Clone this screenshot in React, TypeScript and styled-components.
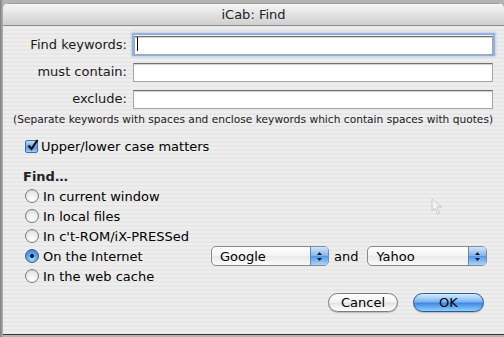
import styled, { createGlobalStyle } from "styled-components";

const GlobalStyle = createGlobalStyle`
  html, body {
    margin: 0;
    padding: 0;
    background: #9c9c9c;
  }
  body {
    font-family: "DejaVu Sans", "Liberation Sans", sans-serif;
    color: #000;
  }
`;

const Screen = styled.div`
  width: 504px;
  height: 337px;
  overflow: hidden;
  padding: 3px 0 0 3px;
  box-sizing: border-box;
  background: linear-gradient(to right, #7d7d7d 0, #b4b4b4 3px);
`;

const Window = styled.div`
  position: relative;
  width: 501px;
  height: 331px;
  border-radius: 6px 6px 0 0;
  overflow: hidden;
  border-bottom: 1px solid #3a3a3a;
  display: flex;
  flex-direction: column;
  background: repeating-linear-gradient(#eeeeee 0 2px, #e7e7e7 2px 4px);
`;

const TitleBar = styled.div`
  height: 21px;
  flex: none;
  display: flex;
  align-items: center;
  justify-content: center;
  background: linear-gradient(#f6f6f6, #e2e2e2 50%, #d0d0d0);
  border-bottom: 1px solid #8d8d8d;
  border-top: 1px solid #9a9a9a;
  font-size: 13px;
  color: #222;
`;

const Body = styled.div`
  padding: 9px 11px 0 10px;
  display: flex;
  flex-direction: column;
`;

const Fields = styled.div`
  display: grid;
  grid-template-columns: 114px 1fr;
  column-gap: 6px;
  row-gap: 8px;
  align-items: center;
`;

const Label = styled.label`
  text-align: right;
  font-size: 13px;
  color: #1a1a1a;
`;

const FieldWrap = styled.div<{ $focused?: boolean }>`
  position: relative;
  height: 19px;
  margin-left: ${(p) => (p.$focused ? "1px" : "0")};
  box-shadow: ${(p) => (p.$focused ? "0 0 0 2px #8fb1dc, 0 0 2px 3px #b9cfe9" : "none")};
`;

const TextInput = styled.input`
  width: 100%;
  height: 100%;
  box-sizing: border-box;
  margin: 0;
  padding: 0 3px;
  border: 1px solid #a6a6a6;
  border-top-color: #6f6f6f;
  background: #fff;
  box-shadow: inset 0 1px 1px #d0d0d0;
  outline: none;
  font-size: 13px;
  font-family: inherit;
`;

const Caret = styled.span`
  position: absolute;
  left: 3px;
  top: 2px;
  width: 1px;
  height: 14px;
  background: #000;
`;

const Note = styled.p`
  margin: 5px 0 0 0;
  font-size: 10.6px;
  text-align: center;
  color: #1a1a1a;
  white-space: nowrap;
  letter-spacing: 0.02px;
`;

const Check = styled.label`
  margin: 14px 0 0 12px;
  display: flex;
  align-items: center;
  gap: 3px;
  font-size: 13px;
`;

const CheckBox = styled.span`
  width: 13px;
  height: 13px;
  box-sizing: border-box;
  border: 1px solid #3d6fb3;
  border-radius: 2px;
  background: linear-gradient(#c6ddf6, #6ea5e4 50%, #4a8be0 51%, #9fd0fb);
  display: flex;
  align-items: center;
  justify-content: center;
  position: relative;
`;

const Heading = styled.div`
  margin: 15px 0 0 10px;
  font-size: 13px;
  font-weight: bold;
  color: #222;
`;

const Options = styled.div`
  margin: 5px 0 0 12px;
  display: flex;
  flex-direction: column;
  gap: 6px;
`;

const OptionRow = styled.div`
  display: flex;
  align-items: center;
  height: 14px;
`;

const Radio = styled.label`
  display: flex;
  align-items: center;
  gap: 4px;
  font-size: 13px;
  width: 186px;
`;

const RadioDot = styled.span<{ $on?: boolean }>`
  width: 14px;
  height: 14px;
  box-sizing: border-box;
  border-radius: 50%;
  border: 1px solid ${(p) => (p.$on ? "#2f5f9e" : "#7a7a7a")};
  background: ${(p) =>
    p.$on
      ? "radial-gradient(circle at 50% 75%, #a9dafd, #5d9ce6 55%, #3a7dd6)"
      : "radial-gradient(circle at 50% 80%, #ffffff, #ececec 55%, #cfcfcf)"};
  display: flex;
  align-items: center;
  justify-content: center;
  &::after {
    content: "";
    display: ${(p) => (p.$on ? "block" : "none")};
    width: 4px;
    height: 4px;
    border-radius: 50%;
    background: #111;
  }
`;

const Engines = styled.div`
  display: flex;
  align-items: center;
  font-size: 13px;
`;

const And = styled.span`
  margin: 0 9px 0 5px;
`;

const Popup = styled.div<{ $w: number }>`
  width: ${(p) => p.$w}px;
  height: 20px;
  box-sizing: border-box;
  border: 1px solid #8a8a8a;
  border-radius: 5px;
  background: linear-gradient(#ffffff, #f3f3f3 50%, #e9e9e9 51%, #fafafa);
  display: flex;
  align-items: stretch;
  overflow: hidden;
  font-size: 13px;
`;

const PopupText = styled.span`
  flex: 1;
  padding-left: 8px;
  display: flex;
  align-items: center;
`;

const PopupArrows = styled.span`
  width: 17px;
  border-left: 1px solid #5c84b8;
  background: linear-gradient(#d2e6fb, #7fb3ec 50%, #5596e5 51%, #a8d6fd);
  display: flex;
  align-items: center;
  justify-content: center;
`;

const Buttons = styled.div`
  margin: 10px 9px 0 0;
  display: flex;
  justify-content: flex-end;
  gap: 15px;
`;

const Button = styled.button<{ $primary?: boolean }>`
  width: ${(p) => (p.$primary ? "71px" : "70px")};
  height: 19px;
  border-radius: 10px;
  border: 1px solid ${(p) => (p.$primary ? "#2a5aa0" : "#7d7d7d")};
  padding: 0;
  font-family: inherit;
  font-size: 13px;
  color: #000;
  background: ${(p) =>
    p.$primary
      ? "linear-gradient(#d6ecff, #7ab6f0 45%, #3f8ae4 55%, #8fd0ff)"
      : "linear-gradient(#ffffff, #f4f4f4 45%, #e4e4e4 55%, #ffffff)"};
  box-shadow: 0 1px 1px rgba(0, 0, 0, 0.2);
`;

const Pointer = styled.svg`
  position: absolute;
  left: 428px;
  top: 195px;
  opacity: 0.45;
`;

function Arrows() {
  return (
    <svg width="7" height="11" viewBox="0 0 7 11">
      <path d="M3.5 1 L6 4 L1 4 Z" fill="#1a1a1a" />
      <path d="M3.5 10 L6 7 L1 7 Z" fill="#1a1a1a" />
    </svg>
  );
}

export default function App() {
  const options = [
    "In current window",
    "In local files",
    "In c't-ROM/iX-PRESSed",
    "On the Internet",
    "In the web cache",
  ];

  return (
    <>
      <GlobalStyle />
      <Screen>
        <Window>
          <TitleBar>iCab: Find</TitleBar>
          <Body>
            <Fields>
              <Label>Find keywords:</Label>
              <FieldWrap $focused>
                <TextInput />
                <Caret />
              </FieldWrap>
              <Label>must contain:</Label>
              <FieldWrap>
                <TextInput />
              </FieldWrap>
              <Label>exclude:</Label>
              <FieldWrap>
                <TextInput />
              </FieldWrap>
            </Fields>
            <Note>
              (Separate keywords with spaces and enclose keywords which contain spaces with quotes)
            </Note>
            <Check>
              <CheckBox>
                <svg width="12" height="12" viewBox="0 0 12 12" style={{ position: "absolute", left: 1, top: -2 }}>
                  <path d="M1.5 6.5 L4.5 10 L10.5 1" stroke="#111" strokeWidth="2.2" fill="none" />
                </svg>
              </CheckBox>
              Upper/lower case matters
            </Check>
            <Heading>Find…</Heading>
            <Options>
              {options.map((label, i) => (
                <OptionRow key={label}>
                  <Radio>
                    <RadioDot $on={i === 3} />
                    {label}
                  </Radio>
                  {i === 3 && (
                    <Engines>
                      <Popup $w={118}>
                        <PopupText>Google</PopupText>
                        <PopupArrows>
                          <Arrows />
                        </PopupArrows>
                      </Popup>
                      <And>and</And>
                      <Popup $w={120}>
                        <PopupText>Yahoo</PopupText>
                        <PopupArrows>
                          <Arrows />
                        </PopupArrows>
                      </Popup>
                    </Engines>
                  )}
                </OptionRow>
              ))}
            </Options>
            <Buttons>
              <Button>Cancel</Button>
              <Button $primary>OK</Button>
            </Buttons>
          </Body>
          <Pointer width="12" height="18" viewBox="0 0 12 18">
            <path d="M1 1 L1 13 L4 10 L6.5 16 L8.5 15 L6 9 L10.5 9 Z" fill="#fff" stroke="#9a9ab8" strokeWidth="1" />
          </Pointer>
        </Window>
      </Screen>
    </>
  );
}
